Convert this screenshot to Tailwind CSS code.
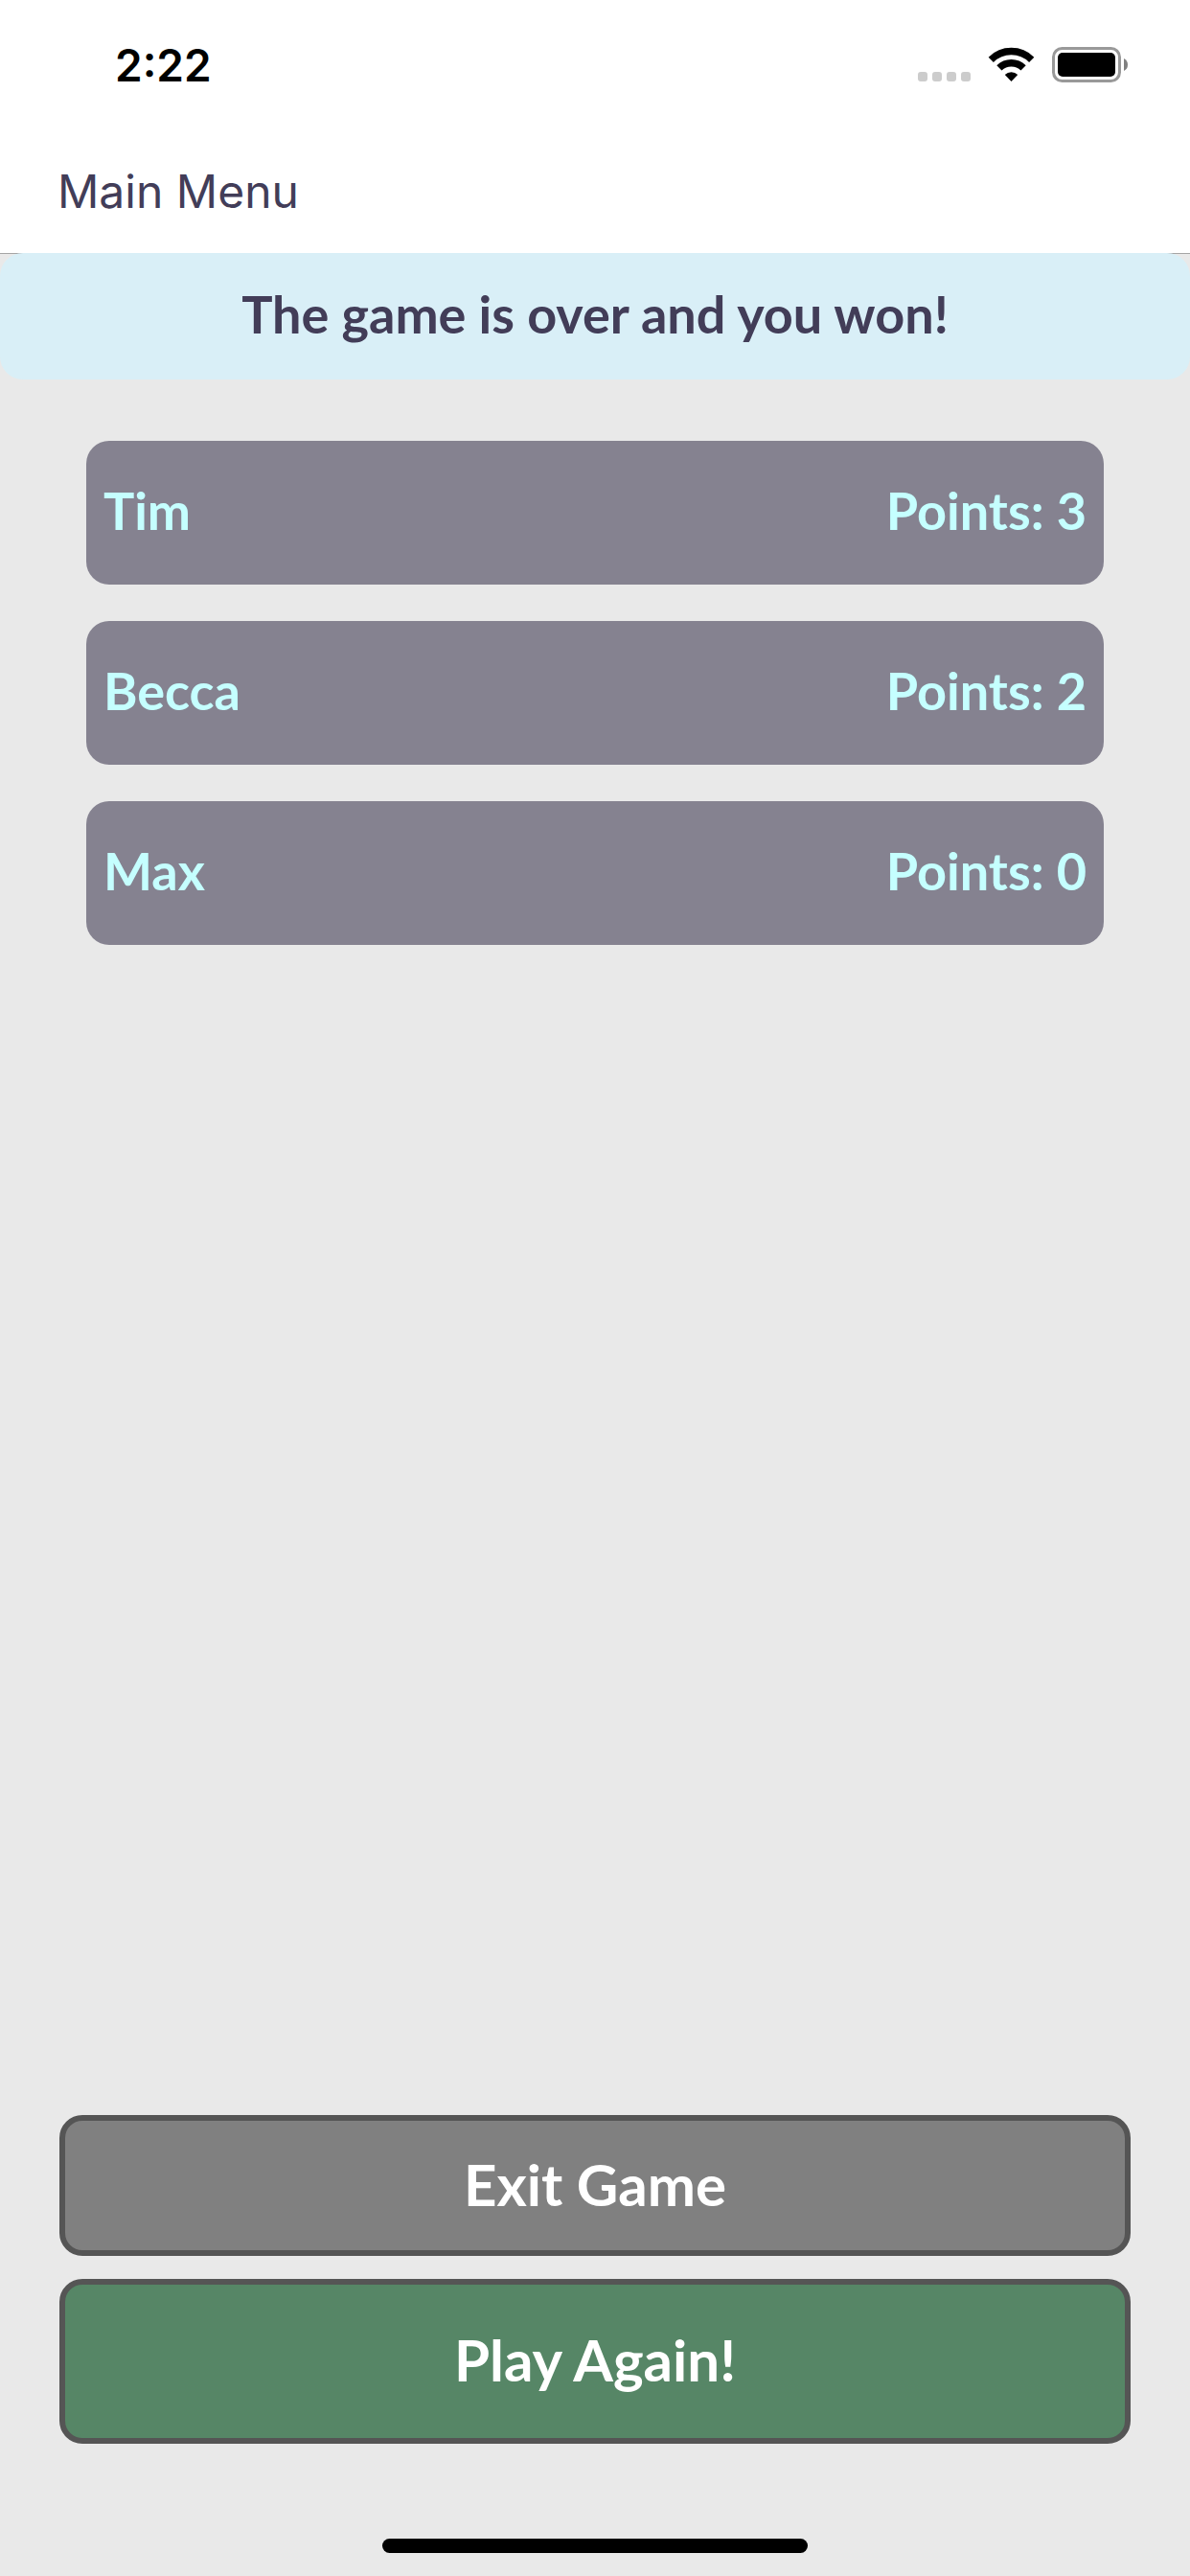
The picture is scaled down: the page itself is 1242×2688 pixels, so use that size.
<!DOCTYPE html>
<html lang="en">
<head>
<meta charset="utf-8">
<meta name="viewport" content="width=device-width, initial-scale=1">
<title>Game Over</title>
<script src="https://cdn.jsdelivr.net/npm/@tailwindcss/browser@4"></script>
</head>
<body class="flex min-h-screen flex-col bg-[#e9e9e9] font-['Marker_Felt','Lato',sans-serif] font-bold">
  <header class="bg-white font-['Inter',sans-serif]">
    <div class="flex h-[136px] items-center justify-between pr-[62px] pl-[120px]">
      <time class="text-[46px] leading-[56px] font-semibold text-black">2:22</time>
      <svg class="h-[40px] w-[222px]" viewBox="0 0 222 40" role="img" aria-label="No signal, Wi-Fi on, battery full">
        <g fill="#cccccc">
          <rect x="0" y="27" width="10" height="10" rx="3"/>
          <rect x="15" y="27" width="10" height="10" rx="3"/>
          <rect x="30" y="27" width="10" height="10" rx="3"/>
          <rect x="45" y="27" width="10" height="10" rx="3"/>
        </g>
        <g fill="none" stroke="#000" stroke-width="7.4">
          <path d="M76.300 14.300A30 30 0 0 1 118.700 14.300"/>
          <path d="M84.900 22.900A18 18 0 0 1 110.100 22.900"/>
        </g>
        <path d="M90.800 30A9.500 9.500 0 0 1 104.200 30L97.500 37Z"/>
        <rect x="141.500" y="2.500" width="69" height="34" rx="9" fill="none" stroke="#999999" stroke-width="3"/>
        <rect x="146" y="7" width="60" height="25" rx="5"/>
        <path d="M215 13Q219 15 219 19.500T215 26Z" fill="#808080"/>
      </svg>
    </div>
    <nav class="flex h-[128px] items-center px-[60px]">
      <a href="#" class="text-[48px] leading-[60px] font-normal text-[#423d58]">Main Menu</a>
    </nav>
  </header>
  <main class="flex grow flex-col border-t border-[#a5a5a5]">
    <h1 class="-mt-px flex h-[132px] items-center justify-center rounded-[24px] bg-[#d9eff7] pb-1 text-[54px] leading-[64px] text-[#423d58]">The game is over and you won!</h1>
    <ul class="mx-[90px] mt-16 flex flex-col gap-[38px] text-[54px] leading-[64px] text-[#c5ffff]">
      <li class="flex h-[150px] items-center justify-between rounded-[24px] bg-[#858290] px-[18px] pb-1"><span>Tim</span><span>Points: 3</span></li>
      <li class="flex h-[150px] items-center justify-between rounded-[24px] bg-[#858290] px-[18px] pb-1"><span>Becca</span><span>Points: 2</span></li>
      <li class="flex h-[150px] items-center justify-between rounded-[24px] bg-[#858290] px-[18px] pb-1"><span>Max</span><span>Points: 0</span></li>
    </ul>
    <div class="mx-[62px] mt-auto flex flex-col gap-6 text-[60px] leading-[64px] text-white">
      <button type="button" class="h-[147px] rounded-[24px] border-[6px] border-[#555555] bg-[#808080] pb-1">Exit Game</button>
      <button type="button" class="h-[172px] rounded-[24px] border-[6px] border-[#555555] bg-[#568666] pb-1">Play Again!</button>
    </div>
    <div class="mx-auto mt-[99px] mb-6 h-[15px] w-[444px] rounded-full bg-black"></div>
  </main>
</body>
</html>
